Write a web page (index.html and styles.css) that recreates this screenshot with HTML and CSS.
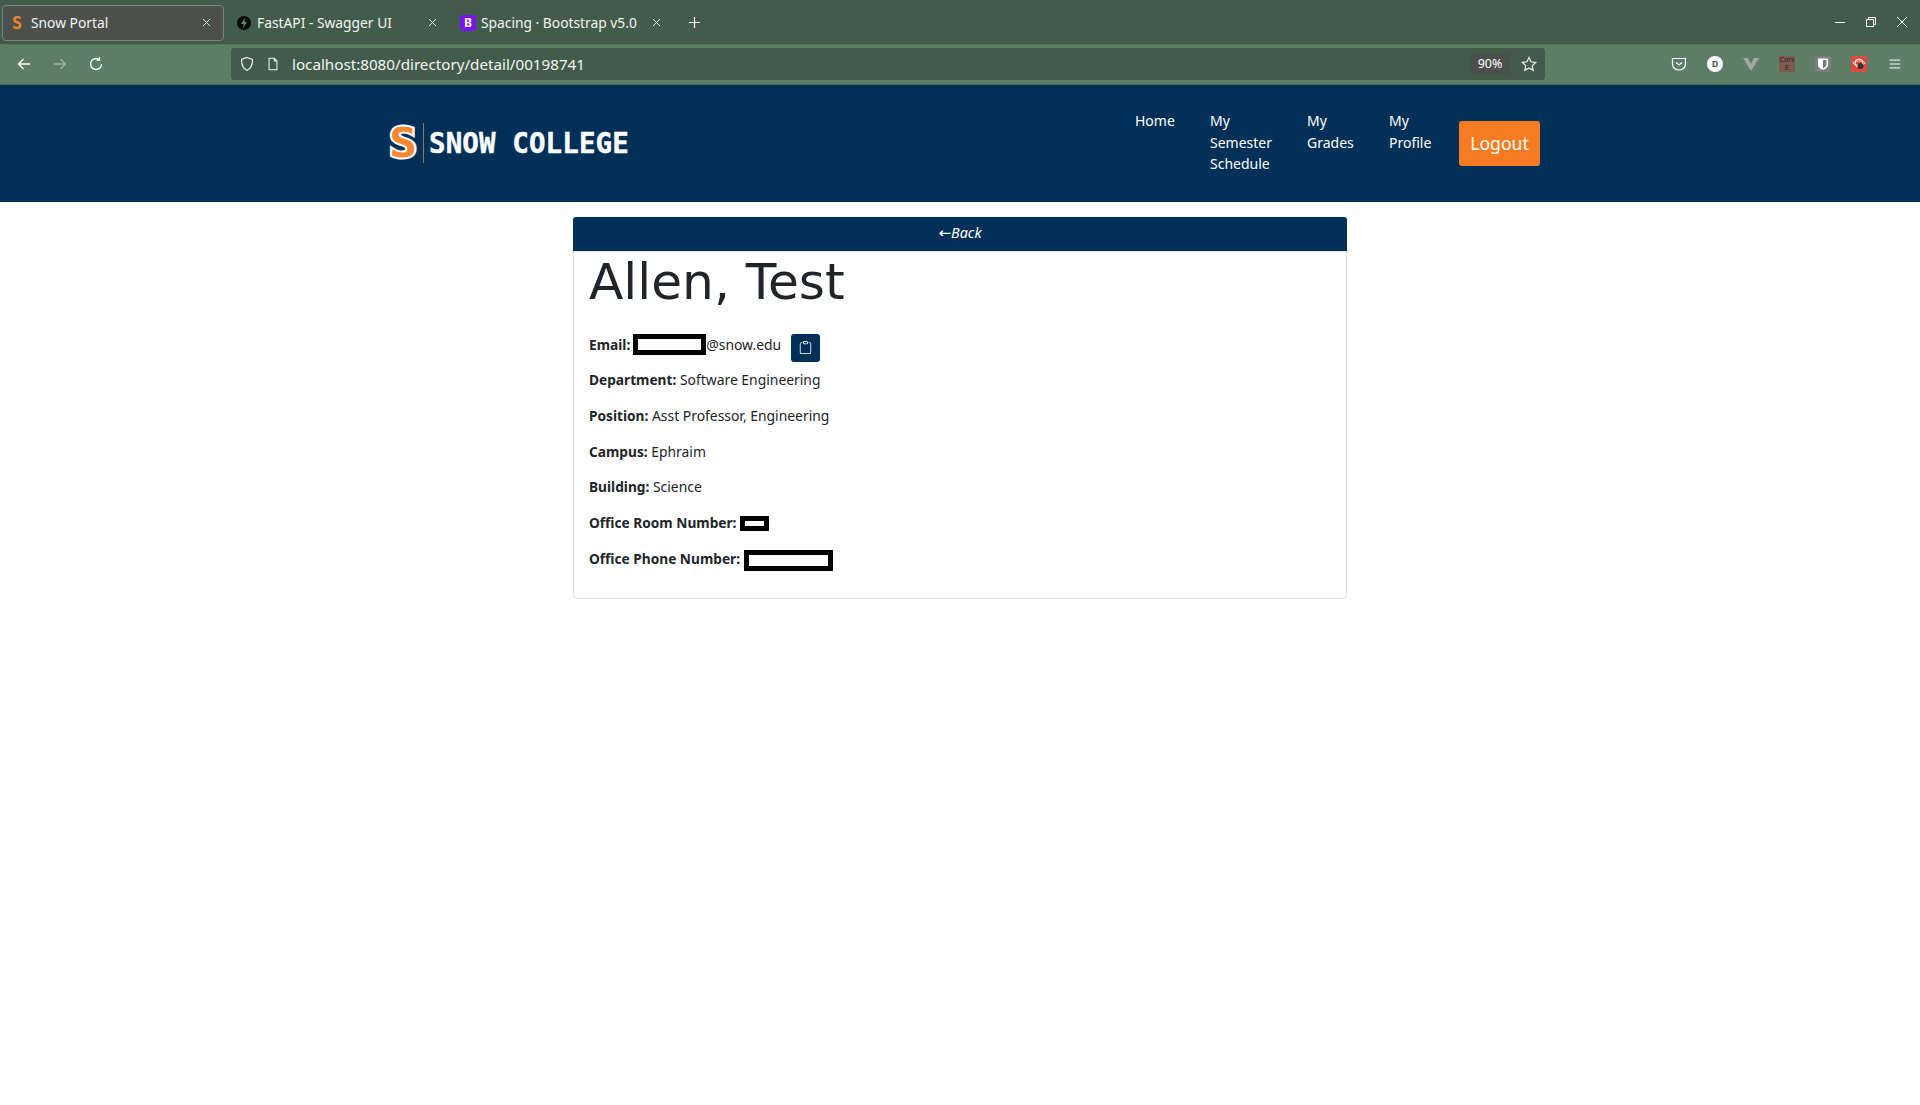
FILE: index.html
```html
<!DOCTYPE html>
<html lang="en">
<head>
<meta charset="utf-8">
<title>Snow Portal</title>
<link rel="stylesheet" href="styles.css">
</head>
<body>
<div class="tabbar">
  <div class="tab tab-active">
    <span class="fav-s">S</span>
    <span class="tab-title">Snow Portal</span>
    <svg class="tab-x" viewBox="0 0 10 10"><path d="M1 1l8 8M9 1l-8 8"/></svg>
  </div>
  <div class="tab">
    <svg class="fav" viewBox="0 0 16 16"><circle cx="8" cy="8" r="7" fill="#0a0a0a"/><path d="M9 3L5 9h2.600L7 13l4-6H8.400z" fill="#5a8a6a"/></svg>
    <span class="tab-title">FastAPI - Swagger UI</span>
    <svg class="tab-x" viewBox="0 0 10 10"><path d="M1 1l8 8M9 1l-8 8"/></svg>
  </div>
  <div class="tab">
    <span class="fav-b">B</span>
    <span class="tab-title">Spacing · Bootstrap v5.0</span>
    <svg class="tab-x" viewBox="0 0 10 10"><path d="M1 1l8 8M9 1l-8 8"/></svg>
  </div>
  <svg class="newtab" viewBox="0 0 14 14"><path d="M7 1v12M1 7h12"/></svg>
  <div class="winbtns">
    <svg viewBox="0 0 12 12"><path d="M1 6.500h10"/></svg>
    <svg viewBox="0 0 12 12"><path d="M1.500 3.500h7v7h-7zM3.500 3.500v-2h7v7h-2"/></svg>
    <svg viewBox="0 0 12 12"><path d="M1 1l10 10M11 1L1 11"/></svg>
  </div>
</div>
<div class="toolbar">
  <svg class="tb-icon" viewBox="0 0 16 16"><path d="M14 8H3M7.500 3L2.500 8l5 5"/></svg>
  <svg class="tb-icon tb-dim" viewBox="0 0 16 16"><path d="M2 8h11M8.500 3l5 5-5 5"/></svg>
  <svg class="tb-icon" viewBox="0 0 16 16"><path d="M13.500 8A5.500 5.500 0 1 1 11 3.400M11.500 1v3h-3"/></svg>
  <div class="urlbar">
    <svg class="url-icon" viewBox="0 0 16 16"><path d="M8 1.500l5.500 2c0 5-1 9-5.500 11-4.500-2-5.500-6-5.500-11z"/></svg>
    <svg class="url-icon url-page" viewBox="0 0 16 16"><path d="M3.500 1.500h6l3 3v10h-9zM9.500 1.500v3h3"/></svg>
    <span class="url-text">localhost:8080/directory/detail/00198741</span>
    <span class="zoom-pill">90%</span>
    <svg class="url-icon star" viewBox="0 0 16 16"><path d="M8 1.500l2 4.300 4.700.6-3.400 3.200.9 4.700L8 12l-4.200 2.300.9-4.700L1.300 6.400 6 5.800z"/></svg>
  </div>
  <div class="ext-row">
    <svg class="ext" viewBox="0 0 16 16"><path class="line" d="M1.500 2.500h13v5.500a6.500 6 0 0 1-13 0zM5 6.500L8 9l3-2.500"/></svg>
    <span class="ext ext-d">D</span>
    <svg class="ext" viewBox="0 0 16 16"><path d="M0 2h5l3 6 3-6h5l-8 13z" fill="#a3a8a3"/></svg>
    <span class="ext ext-cors">Cors<br>E</span>
    <svg class="ext" viewBox="0 0 16 16"><rect width="16" height="16" rx="2" fill="#7c7c7c"/><path d="M3 2.500h10v6c0 3-2.500 4.500-5 5.500-2.500-1-5-2.500-5-5.500z" fill="#fff"/><path d="M8 4h3.500v4.500c0 2-1.800 3-3.500 3.800z" fill="#7c7c7c"/></svg>
    <svg class="ext" viewBox="0 0 16 16"><rect width="16" height="16" fill="#dc4a3d"/><circle cx="8" cy="7" r="4" fill="none" stroke="#fff"/><ellipse cx="8" cy="7" rx="6" ry="2" fill="none" stroke="#fff" stroke-width=".7"/><circle cx="9.500" cy="10" r="3" fill="#333"/></svg>
    <svg class="tb-icon menu" viewBox="0 0 16 16"><path d="M2 3.500h12M2 8h12M2 12.500h12"/></svg>
  </div>
</div>
<header class="site-header">
  <a class="brand">
    <span class="brand-s">S</span>
    <span class="brand-rule"></span>
    <span class="brand-name">SNOW COLLEGE</span>
  </a>
  <nav class="site-nav">
    <a class="nav-home">Home</a>
    <a class="nav-sem">My<br>Semester<br>Schedule</a>
    <a class="nav-gr">My<br>Grades</a>
    <a class="nav-pr">My<br>Profile</a>
    <a class="logout">Logout</a>
  </nav>
</header>
<main class="content">
  <a class="back"><span class="arrow">←</span>Back</a>
  <section class="card">
    <h1>Allen, Test</h1>
    <p class="row-email"><b>Email:</b><span class="redact r-email"></span><span>@snow.edu</span><button class="copy"><svg viewBox="0 0 16 16"><path d="M4 1.500H3a2 2 0 0 0-2 2V14a2 2 0 0 0 2 2h10a2 2 0 0 0 2-2V3.500a2 2 0 0 0-2-2h-1v1h1a1 1 0 0 1 1 1V14a1 1 0 0 1-1 1H3a1 1 0 0 1-1-1V3.500a1 1 0 0 1 1-1h1v-1z"/><path d="M9.500 1a.5.5 0 0 1 .5.5v1a.5.5 0 0 1-.5.5h-3a.5.5 0 0 1-.5-.5v-1a.5.5 0 0 1 .5-.5h3zm-3-1A1.500 1.500 0 0 0 5 1.500v1A1.500 1.500 0 0 0 6.500 4h3A1.500 1.500 0 0 0 11 2.500v-1A1.500 1.500 0 0 0 9.500 0h-3z"/></svg></button></p>
    <p><b>Department:</b> Software Engineering</p>
    <p><b>Position:</b> Asst Professor, Engineering</p>
    <p><b>Campus:</b> Ephraim</p>
    <p><b>Building:</b> Science</p>
    <p><b>Office Room Number:</b> <span class="redact r-room"></span></p>
    <p><b>Office Phone Number:</b> <span class="redact r-phone"></span></p>
  </section>
</main>
</body>
</html>
```
FILE: styles.css
```css
* { box-sizing: border-box; }
html, body { margin: 0; padding: 0; }
body { background: #fff; color: #212529; font-family: "Noto Sans", sans-serif; font-size: 13.900px; height: 1105px; overflow: hidden; }

svg { fill: none; stroke: none; }

.tabbar { height: 44px; background: #425b4b; display: flex; align-items: center; padding-left: 2px; color: #fff; }
.tab { width: 224px; height: 36px; margin-top: 1px; display: flex; align-items: center; padding: 0 10px 0 9px; font-size: 13.800px; color: #f2f5f2; border: 1px solid transparent; }
.tab-active { width: 222px; background: #4c4f4c; border-color: #74857a; border-radius: 4px; margin-right: 2px; padding-left: 6px; }
.tab-title { flex: 1; white-space: nowrap; overflow: hidden; margin-left: 5px; }
.tab-active .tab-title { margin-left: 6px; }
.tab-x { width: 9px; height: 9px; stroke: #f0f3f0; stroke-width: 1; flex: none; margin-right: 2px; }
.fav { width: 16px; height: 16px; flex: none; }
.fav-s { width: 16px; text-align: center; font: bold 17px "DejaVu Sans Mono", monospace; color: #e8852f; flex: none; }
.fav-b { width: 16px; height: 16px; background: #7a12f0; color: #fff; border-radius: 3px; text-align: center; font: bold 12px/16px "Noto Sans", sans-serif; flex: none; }
.newtab { width: 13px; height: 13px; stroke: #fff; stroke-width: 1.300; margin-left: 14px; }
.winbtns { margin-left: auto; display: flex; gap: 19px; margin-right: 12px; }
.winbtns svg { width: 12px; height: 12px; stroke: #fff; stroke-width: 1; }

.toolbar { height: 41px; background: #5e7f66; border-top: 1px solid #577460; border-bottom: 1px solid #4d6b57; display: flex; align-items: center; padding: 0 0 1px 16px; color: #fff; }
.tb-icon { width: 16px; height: 16px; stroke: #fff; stroke-width: 1.300; flex: none; margin-right: 20px; }
.tb-dim { opacity: .4; }
.urlbar { width: 1314px; height: 32px; margin-left: 107px; background: #425b4b; border-radius: 3px; display: flex; align-items: center; padding: 0 8px; flex: none; }
.url-icon { width: 16px; height: 16px; stroke: #eef2ee; stroke-width: 1.200; flex: none; }
.url-page { margin-left: 11px; width: 14px; }
.url-text { flex: 1; margin-left: 12px; font-size: 15.200px; color: #f3f5f3; }
.zoom-pill { background: #4c4f4c; border-radius: 3px; font-size: 12.500px; width: 38px; height: 20px; line-height: 20px; text-align: center; margin-right: 12px; }
.ext-row { margin-left: auto; display: flex; align-items: center; gap: 20px; padding-right: 6px; }
.ext { width: 16px; height: 16px; flex: none; display: block; }
.line { stroke: #fff; stroke-width: 1.200; }
.ext-d { background: #fff; border-radius: 50%; color: #425b4b; font: bold 9px/16px "Noto Sans", sans-serif; text-align: center; }
.ext-cors { background: #7d5b4c; color: #2b211c; font: 7px/8px "Noto Sans", sans-serif; text-align: center; overflow: hidden; }
.menu { width: 14px; height: 14px; stroke-width: 1.100; margin: 0 12px 0 1px; }

.site-header { height: 117px; background: #003057; display: flex; align-items: center; padding: 0 380px 0 390px; color: #fff; }
.brand { display: flex; align-items: center; width: 238px; margin-bottom: 2px; }
.brand-s { width: 26px; height: 40px; flex: none; font: bold 40px/40px "DejaVu Sans Mono", monospace; color: #f7882f; -webkit-text-stroke: 4px #fff; paint-order: stroke fill; text-align: center; transform: scaleX(1.150); }
.brand-rule { width: 1px; height: 40px; background: #8a7a55; margin: 0 5px 0 7px; flex: none; }
.brand-name { font: bold 27.500px/30px "DejaVu Sans Mono", monospace; letter-spacing: .1px; white-space: nowrap; -webkit-text-stroke: .4px #fff; }
.site-nav { margin-left: auto; align-self: stretch; display: flex; font-size: 14px; line-height: 21.600px; color: #fff; }
.site-nav a { margin-top: 25px; }
.nav-home { width: 75px; }
.nav-sem { width: 97px; }
.nav-gr { width: 82px; }
.nav-pr { width: 70px; }
.site-nav .logout { align-self: center; margin-top: 0; width: 81px; height: 45px; background: #f77b22; border-radius: 3px; font-size: 17.600px; line-height: 45px; text-align: center; }

.content { width: 774px; margin: 15px 0 0 573px; }
.back { display: block; height: 34px; background: #003057; border-radius: 3px 3px 0 0; color: #fff; font-style: italic; text-align: center; line-height: 32px; font-size: 14.400px; }
.arrow { font: normal 15px "DejaVu Sans", sans-serif; }
.card { height: 348px; border: 1px solid #dcdfe2; border-top: 1px solid #e3e5e8; border-radius: 0 0 4px 4px; padding: 0 15px; }
h1 { margin: 0 0 21.600px; font: 400 50.200px/60px "DejaVu Sans", sans-serif; color: #212529; }
.card p { margin: 0 0 14.100px; line-height: 21.600px; height: 21.600px; }
.card p b { font-weight: 700; font-size: 13.700px; }
.row-email { display: flex; align-items: flex-start; }
.redact { display: inline-block; background: #fff; border: 5px solid #000; vertical-align: middle; }
.r-email { width: 73px; height: 21px; margin-left: 3px; }
.r-room { width: 29px; height: 15px; margin-top: -1px; }
.r-phone { width: 89px; height: 21px; }
.copy { width: 29px; height: 28px; padding: 0; margin: 0 0 0 10px; border: 0; background: #003057; border-radius: 3px; display: flex; align-items: center; justify-content: center; flex: none; }
.copy svg { width: 13px; height: 13px; fill: #fff; }
```
